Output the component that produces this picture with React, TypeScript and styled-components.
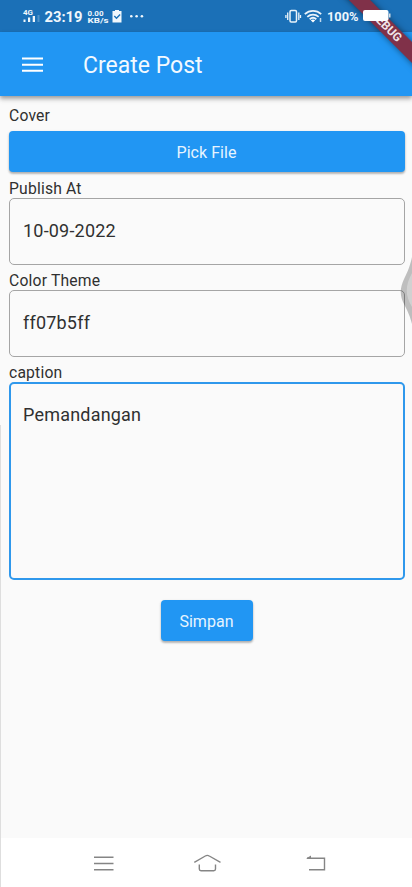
import React from 'react';
import styled, { createGlobalStyle } from 'styled-components';

const Global = createGlobalStyle`
  * { box-sizing: border-box; }
  body { margin: 0; background: #fafafa; font-family: Roboto, "Liberation Sans", sans-serif; }
  svg { display: block; }
`;

const Screen = styled.div`
  position: relative;
  display: flex;
  flex-direction: column;
  width: 412px;
  height: 887px;
  overflow: hidden;
  background: #fafafa;
  color: #303030;
`;

const StatusBar = styled.header`
  display: flex;
  flex: none;
  height: 32px;
  justify-content: space-between;
  background: #1b70b7;
`;

const AppBar = styled.div`
  display: flex;
  flex: none;
  align-items: center;
  height: 64px;
  padding-left: 22px;
  gap: 40px;
  background: #2196f3;
  box-shadow: 0 2px 4px rgba(0, 0, 0, 0.3), 0 4px 5px rgba(0, 0, 0, 0.12);
`;

const Title = styled.h1`
  margin: 0;
  padding-top: 2px;
  font-size: 23px;
  font-weight: 400;
  letter-spacing: 0;
  color: #f2f9ff;
`;

const Form = styled.main`
  display: flex;
  flex: 1;
  flex-direction: column;
  padding: 10px 7px 0 9px;
`;

const Label = styled.label`
  height: 19px;
  line-height: 20px;
  font-size: 15.7px;
  letter-spacing: 0.18px;
`;

const Button = styled.button<{ $width?: number }>`
  flex: none;
  width: ${(p) => (p.$width ? `${p.$width}px` : '100%')};
  height: 41px;
  padding: 1px 1px 0 0;
  border: 0;
  border-radius: 4px;
  background: #2196f3;
  color: #e6f4ff;
  font: 400 16px Roboto, sans-serif;
  letter-spacing: 0.05px;
  box-shadow: 0 2px 2px rgba(0, 0, 0, 0.2), 0 1px 3px rgba(0, 0, 0, 0.16);
`;

const Field = styled.div<{ $height: number; $focused?: boolean }>`
  flex: none;
  height: ${(p) => p.$height}px;
  padding: ${(p) => (p.$focused ? '20px 12px' : '21px 13px')};
  border: ${(p) => (p.$focused ? '2px solid #2f98ec' : '1px solid #a5a5a5')};
  border-radius: 5px;
  font-size: 18px;
  line-height: 22px;
  letter-spacing: 0.2px;
`;

const Group = styled.section<{ $top: number; $gap?: number }>`
  display: flex;
  flex-direction: column;
  margin-top: ${(p) => p.$top}px;
  gap: ${(p) => p.$gap ?? 0}px;
`;

const Actions = styled.div`
  display: flex;
  justify-content: center;
  margin-top: 20px;
`;

const NavBar = styled.nav`
  flex: none;
  height: 49px;
  background: #fff;
`;

const Ribbon = styled.div`
  position: absolute;
  z-index: 2;
  top: 19px;
  left: 326px;
  width: 120px;
  height: 15px;
  transform: rotate(45deg);
  background: #803149;
  box-shadow: 0 0 6px rgba(0, 0, 0, 0.5);
  color: #f0e4e8;
  font-size: 12px;
  font-weight: 700;
  line-height: 15px;
  text-align: center;
`;

const Battery = styled.svg`
  position: absolute;
  z-index: 3;
  top: 9px;
  left: 362px;
`;

const EdgeHandle = styled.svg`
  position: absolute;
  top: 256px;
  left: 400px;
`;

const EdgeLine = styled.div`
  position: absolute;
  top: 425px;
  bottom: 0;
  left: 0;
  width: 1px;
  background: #dedede;
`;

const StatusLeft = () => (
  <svg width="160" height="32" fill="#f0f7fc" fontFamily="Roboto, sans-serif" fontWeight="700">
    <text x="23" y="15" fontSize="8" textLength="10" lengthAdjust="spacingAndGlyphs">4G</text>
    <path d="M23.500 19.500h2v2.500h-2zM28 17.500h2.200v4.500h-2.200zM32.700 16h2.300v6h-2.300z" />
    <path d="M37.500 15h2v7h-2z" opacity=".25" />
    <text x="44.500" y="22" fontSize="14.500" textLength="38" lengthAdjust="spacingAndGlyphs">23:19</text>
    <text x="87.500" y="15.500" fontSize="7.300" textLength="16" lengthAdjust="spacingAndGlyphs">0.00</text>
    <text x="87.500" y="22.500" fontSize="7" textLength="21" lengthAdjust="spacingAndGlyphs">KB/s</text>
    <path d="M112.500 11h2.500V10h4v1h2.500v11.500H112.500V11z" />
    <path d="M114.300 16l2.200 2.200 3.600-3.700" fill="none" stroke="#1b70b7" strokeWidth="1.400" />
    <circle cx="131.300" cy="16.300" r="1.300" />
    <circle cx="136.600" cy="16.300" r="1.300" />
    <circle cx="141.900" cy="16.300" r="1.300" />
  </svg>
);

const StatusRight = () => (
  <svg width="132" height="32" viewBox="280 0 132 32" fill="none" stroke="#eaf3fa" strokeWidth="1.500">
    <rect x="290" y="10.500" width="6.500" height="11.500" rx="1.200" />
    <path d="M287.700 12.500v7.500M285.900 15v3M298.800 12.500v7.500M300.500 15v3" strokeWidth="1.300" />
    <path d="M304.800 14.200c4.800-4.300 11.600-4.300 16.400 0M307.300 16.900c3.400-2.900 8-2.900 11.400 0M309.700 19.200c2-1.700 4.600-1.700 6.600 0" strokeWidth="1.800" />
    <path d="M310.800 20.200q2.200-1.500 4.400 0l-2.200 2.300z" fill="#fff" stroke="none" />
    <path d="M320.500 18v4" opacity=".8" />
    <text x="327" y="21.300" fill="#f0f7fc" stroke="none" fontFamily="Roboto, sans-serif" fontSize="12.500" fontWeight="700" textLength="31.500" lengthAdjust="spacingAndGlyphs">100%</text>
  </svg>
);

export default function App() {
  return (
    <>
      <Global />
      <Screen>
        <StatusBar>
          <StatusLeft />
          <StatusRight />
        </StatusBar>
        <AppBar>
          <svg width="21" height="16" fill="#fff">
            <path d="M0 1.500h21v2H0zM0 7.700h21v2H0zM0 13.700h21v2H0z" />
          </svg>
          <Title>Create Post</Title>
        </AppBar>
        <Form>
          <Group $top={0} $gap={6}>
            <Label>Cover</Label>
            <Button>Pick File</Button>
          </Group>
          <Group $top={7}>
            <Label>Publish At</Label>
            <Field $height={67}>10-09-2022</Field>
          </Group>
          <Group $top={6}>
            <Label>Color Theme</Label>
            <Field $height={67}>ff07b5ff</Field>
          </Group>
          <Group $top={6}>
            <Label>caption</Label>
            <Field $height={198} $focused>Pemandangan</Field>
          </Group>
          <Actions>
            <Button $width={92}>Simpan</Button>
          </Actions>
        </Form>
        <NavBar>
          <svg width="412" height="49" viewBox="0 838 412 49" fill="none" stroke="#858585" strokeWidth="1.400">
            <path d="M94 857.300h19.500M94 863.500h19.500M94 869.800h19.500" />
            <path d="M194.300 862.300l11-6.300q2-1.200 4 0l11.200 6.300M199.300 864.500v4.500q0 1.700 1.700 1.700h12.800q1.700 0 1.700-1.700v-4.500" />
            <path d="M307 858.300h17.500v11.500h-15.500" />
            <path d="M306 858.500l5-3v3z" fill="#858585" stroke="none" />
          </svg>
        </NavBar>
        <EdgeHandle width="12" height="70" viewBox="400 256 12 70">
          <path d="M412 257c-2 9-4 14-7.500 21-5 10-5 18 0 27 3.500 7 5.500 11 7.500 19z" fill="#000" opacity=".24" />
          <path d="M412 273c-7 13-7 22 0 34z" fill="#fff" opacity=".3" />
        </EdgeHandle>
        <EdgeLine />
        <Ribbon>DEBUG</Ribbon>
        <Battery width="29" height="15">
          <rect x="1" y="1" width="25.500" height="11" rx="2" fill="#fff" />
          <path d="M27 4.500h1.500v4H27z" fill="#d6dfe8" />
        </Battery>
      </Screen>
    </>
  );
}
